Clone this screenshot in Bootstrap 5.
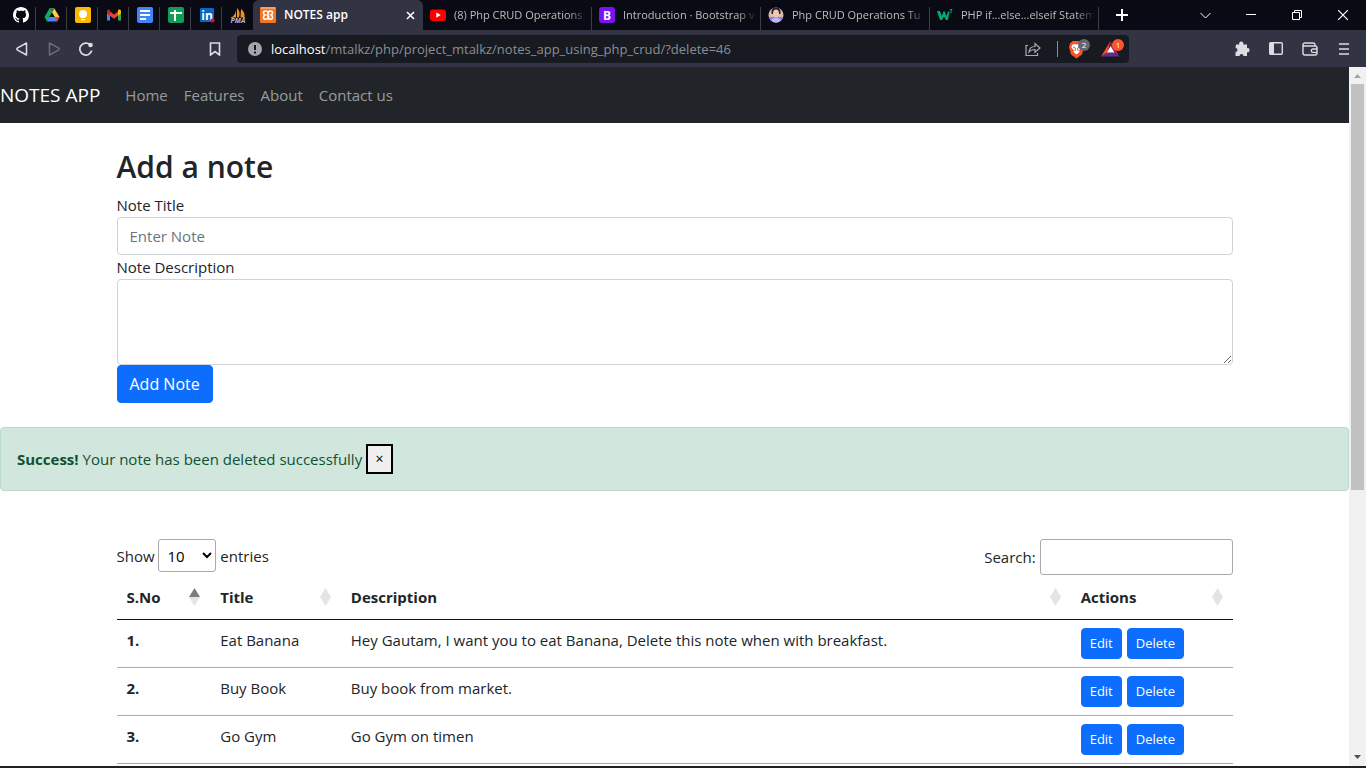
<!DOCTYPE html>
<html lang="en">
<head>
<meta charset="utf-8">
<meta name="viewport" content="width=device-width, initial-scale=1">
<title>NOTES app</title>
<link href="https://cdn.jsdelivr.net/npm/bootstrap@5.3.0/dist/css/bootstrap.min.css" rel="stylesheet">
<style>
  body { font-family: "Open Sans", "Noto Sans", sans-serif; font-size: 15px; line-height: 24px; color: #212529; }
  /* browser frame */
  .tab-strip { background: #0a0a14; height: 30px; padding-left: 5px; color: #bdbec2; font-size: 11px; line-height: 18px; }
  .tab-strip svg, .tool-bar svg { display: block; flex: none; }
  .pin-tab, .page-tab { background: none; border: 0; color: inherit; height: 30px; padding: 0; position: relative; }
  .pin-tab { width: 31px; flex: none; }
  .pin-tab:not(:nth-child(8))::after, .page-tab:not(.current)::after { content: ""; position: absolute; right: 0; top: 7px; bottom: 0; width: 1px; background: #3d3d42; }
  .page-tab { flex: 0 1 169px; min-width: 0; padding: 0 4px 0 7px; text-align: left; }
  .page-tab.current { flex-basis: 170px; background: #323443; color: #fff; font-size: 12px; font-weight: 600; border-radius: 6px 6px 0 0; padding: 0 8px 0 6px; }
  .tab-label { overflow: hidden; white-space: nowrap; flex: 1 1 0; min-width: 0; }
  .fading { -webkit-mask-image: linear-gradient(90deg, #000 85%, transparent); mask-image: linear-gradient(90deg, #000 85%, transparent); }
  .frame-btn { background: none; border: 0; padding: 0; color: #fff; width: 46px; height: 30px; }
  .tool-bar { background: #323443; height: 37px; color: #dcdde1; }
  .tool-side { width: 237px; flex: none; padding: 0 6px; }
  .tool-right { gap: 2px; }
  .tool-btn { background: none; border: 0; padding: 0; color: inherit; width: 32px; height: 32px; }
  .url-box { background: #171a21; height: 28px; border-radius: 4px; padding-right: 2px; font-size: 13px; line-height: 20px; color: #8b8e94; }
  .url-box b { color: #fff; font-weight: 400; }
  .scroll-rail { width: 17px; background: #f1f1f1; flex: none; }
  .scroll-rail svg { display: block; flex: none; }
  .scroll-thumb { flex: 406 0 0; background: #c1c1c1; margin: 0 2px 0 2px; }
  .scroll-rest { flex: 259 0 0; }
  .desk-edge { height: 2px; background: #202124; flex: none; }
  /* notes page */
  .notes-nav .navbar-brand { font-size: 19px; line-height: 30px; margin-right: 17px; }
  .notes-nav { --bs-navbar-color: rgba(255,255,255,.55); }
  .notes-page h2 { font-size: 30px; line-height: 40px; font-weight: 600; margin-bottom: 6px; }
  .notes-page .form-control { font-size: 15px; line-height: 24px; border-color: #ced4da; border-radius: 4px; }
  .notes-page .form-control::placeholder { color: #6c757d; }
  .notes-page .btn { --bs-btn-border-radius: 4px; font-size: 16px; line-height: 24px; --bs-btn-bg: #0d6efd; }
  .notes-page .btn-sm { font-size: 13px; line-height: 21px; }
  .note-alert { background: #d1e7dd; border-color: #badbcc; color: #0f5132; border-radius: 4px; margin-bottom: 48px; line-height: 30px; }
  .alert-x { border: 2px solid #000; background: #efefef; color: #000; width: 27px; height: 30px; padding: 0; font-size: 14px; line-height: 24px; vertical-align: top; }
  .len-select { width: 58px; height: 33px; border: 1px solid #aaa; border-radius: 3px; background: transparent; padding: 4px; color: #000; }
  .find-box { width: 193px; height: 36px; border: 1px solid #aaa; border-radius: 3px; padding: 5px; }
  .notes-table { width: 100%; table-layout: fixed; border-collapse: collapse; }
  .notes-table thead th { padding: 10px; height: 44px; position: relative; border-bottom: 1px solid #111; vertical-align: top; }
  .notes-table tbody th, .notes-table tbody td { padding: 8px 10px; height: 48px; vertical-align: top; border-bottom: 1px solid #aaacae; }
  .notes-table th { font-weight: 700; }
  .sort-mark { position: absolute; right: 10px; top: 13px; }
  .act-pair { gap: 5px; }
</style>
</head>
<body class="d-flex flex-column vh-100 overflow-hidden">

<div class="tab-strip d-flex">
  <button class="pin-tab d-flex align-items-center justify-content-center" aria-label="GitHub"><svg width="16" height="16" viewBox="0 0 16 16" fill="#fff"><path d="M8 0C3.58 0 0 3.58 0 8c0 3.54 2.29 6.53 5.47 7.59.4.07.55-.17.55-.38 0-.19-.01-.82-.01-1.49-2.01.37-2.53-.49-2.69-.94-.09-.23-.48-.94-.82-1.13-.28-.15-.68-.52-.01-.53.63-.01 1.08.58 1.23.82.72 1.21 1.87.87 2.33.66.07-.52.28-.87.51-1.07-1.78-.2-3.64-.89-3.64-3.95 0-.87.31-1.59.82-2.15-.08-.2-.36-1.02.08-2.12 0 0 .67-.21 2.2.82.64-.18 1.32-.27 2-.27s1.36.09 2 .27c1.53-1.04 2.2-.82 2.2-.82.44 1.1.16 1.92.08 2.12.51.56.82 1.27.82 2.15 0 3.07-1.87 3.75-3.65 3.95.29.25.54.73.54 1.48 0 1.07-.01 1.93-.01 2.2 0 .21.15.46.55.38A8.01 8.01 0 0 0 16 8c0-4.42-3.58-8-8-8z"/></svg></button>
  <button class="pin-tab d-flex align-items-center justify-content-center" aria-label="Drive"><svg width="16" height="16" viewBox="0 0 16 16"><path d="M5.400 1.500 .5 10l2.400 4.500L8 5.800z" fill="#11a861"/><path d="M5.400 1.500h5L15.500 10h-4.800z" fill="#ffcf48"/><path d="M5.400 1.500h5L8 5.800z" fill="#0d8a4f"/><path d="M5.300 10h10.200L13 14.500H2.900z" fill="#4688f4"/><path d="M10.800 10h4.700L13 14.500z" fill="#ea4335"/><path d="M8 5.800L10.600 10H5.500z" fill="#0a0a14"/></svg></button>
  <button class="pin-tab d-flex align-items-center justify-content-center" aria-label="Keep"><svg width="16" height="16" viewBox="0 0 16 16"><rect width="16" height="16" rx="2" fill="#fdb900"/><circle cx="8" cy="7" r="4" fill="#fff"/><path d="M6 9h4v2H6zM6 12h4v1.200H6z" fill="#fff"/></svg></button>
  <button class="pin-tab d-flex align-items-center justify-content-center" aria-label="Gmail"><svg width="16" height="16" viewBox="0 0 16 16"><path d="M1 4v9.500h3V7z" fill="#4285f4"/><path d="M15 4v9.500h-3V7z" fill="#34a853"/><path d="M4 4.600v4.200l4 3 4-3V4.600L8 7.600z" fill="#ea4335"/><path d="M1 4.200C1 2.400 3 2 4 3v5.800L1 6.500z" fill="#c5221f"/><path d="M15 4.200C15 2.400 13 2 12 3v5.800l3-2.300z" fill="#fbbc04"/></svg></button>
  <button class="pin-tab d-flex align-items-center justify-content-center" aria-label="Docs"><svg width="16" height="16" viewBox="0 0 16 16"><rect width="16" height="16" rx="2" fill="#4285f4"/><path d="M3 4h10M3 8h10M3 12h6" stroke="#fff" stroke-width="1.800"/></svg></button>
  <button class="pin-tab d-flex align-items-center justify-content-center" aria-label="Sheets"><svg width="16" height="16" viewBox="0 0 16 16"><rect width="16" height="16" rx="2" fill="#0f9d58"/><path d="M2 6h12M7 3v11" stroke="#fff" stroke-width="2"/></svg></button>
  <button class="pin-tab d-flex align-items-center justify-content-center" aria-label="LinkedIn"><svg width="16" height="16" viewBox="0 0 16 16"><rect x="1" y="1" width="14" height="14" rx="1" fill="#0a66c2"/><text x="8" y="12.500" font-size="12" font-weight="700" fill="#fff" text-anchor="middle" font-family="Open Sans">in</text><circle cx="13.500" cy="13.500" r="2" fill="#e0142d"/></svg></button>
  <button class="pin-tab d-flex align-items-center justify-content-center" aria-label="phpMyAdmin"><svg width="16" height="16" viewBox="0 0 16 16"><path d="M6 .5C6.500 4 5 8 1.500 10.500H6zM7 1c3 3 3 6 2 9.500H7zM11 2c3 2 4 5 3.500 8.500h-4z" fill="#f29111"/><path d="M1 10.500h2M13 10.500h2" stroke="#8d8fa6"/><text x="8" y="15.500" font-size="7" font-weight="700" font-style="italic" fill="#b7b8c9" text-anchor="middle" font-family="Open Sans">PMA</text></svg></button>

  <button class="page-tab current d-flex align-items-center gap-2">
    <svg width="17" height="16" viewBox="0 0 17 16"><rect x="1" width="16" height="16" rx="1" fill="#f37623"/><path d="M2 1h14" stroke="#ffc9a0"/><path d="M9 8h-1.500M9 6.200v3.600M9 6.200C9 5 8 4 6.800 4S4.500 4.600 4.500 5.700c0 .9.500 1.800 1.500 2.300-1 .5-1.500 1.400-1.500 2.200 0 1.200 1 2.100 2.300 2.100S9 11.400 9 9.800h1.500M9 6.200h1.500M9 6.200C9 5 10 4 11.200 4s2.300.6 2.300 1.700c0 .9-.5 1.800-1.500 2.300 1 .5 1.500 1.400 1.500 2.200 0 1.200-1 2.100-2.300 2.100S9 11.400 9 9.800" fill="none" stroke="#fff" stroke-width="1.500"/></svg>
    <span class="tab-label">NOTES app</span>
    <svg width="9" height="9" viewBox="0 0 9 9" stroke="#fff" stroke-width="1.600"><path d="M1 1l7 7M8 1L1 8"/></svg>
  </button>
  <button class="page-tab d-flex align-items-center gap-2">
    <svg width="16" height="16" viewBox="0 0 16 16"><rect y="2.500" width="16" height="11.500" rx="3" fill="#f00"/><path d="M6.300 5.500v5.200l4.500-2.600z" fill="#fff"/></svg>
    <span class="tab-label fading">(8) Php CRUD Operations</span>
  </button>
  <button class="page-tab d-flex align-items-center gap-2">
    <svg width="16" height="16" viewBox="0 0 16 16"><rect width="16" height="16" rx="3" fill="#7a12f5"/><text x="8" y="12.500" font-size="12" font-weight="700" fill="#fff" text-anchor="middle" font-family="Open Sans">B</text></svg>
    <span class="tab-label fading">Introduction · Bootstrap v</span>
  </button>
  <button class="page-tab d-flex align-items-center gap-2">
    <svg width="16" height="16" viewBox="0 0 16 16"><defs><clipPath id="face"><circle cx="8" cy="8" r="7.500"/></clipPath></defs><g clip-path="url(#face)"><path fill="#d9bfb0" d="M0 0h16v16H0z"/><path fill="#8f7cf0" d="M0 10h16v6H0z"/><path d="M3.500 7C3 1 6 .3 8 .3s5 .7 4.500 6.700z" fill="#2a2030"/><ellipse cx="8" cy="6.500" rx="3" ry="4" fill="#f3c8a8"/><path d="M3 16c0-4 2-5 5-5s5 1 5 5z" fill="#c2b4ff"/></g></svg>
    <span class="tab-label fading">Php CRUD Operations Tu</span>
  </button>
  <button class="page-tab d-flex align-items-center gap-2">
    <svg width="16" height="16" viewBox="0 0 16 16"><path d="M0 4h3l1.700 5L6.500 4.500h1.200L9.500 9 11 4.500h1.500L11 13H9L7 9.500 5 13H3z" fill="#04aa6d"/><path d="M12.800 2.500H15L13.800 4c1.200 0 1.300 2-1 1.700" fill="none" stroke="#04aa6d"/></svg>
    <span class="tab-label fading">PHP if...else...elseif Statem</span>
  </button>
  <button class="frame-btn d-flex align-items-center justify-content-center" aria-label="New tab"><svg width="12" height="12" viewBox="0 0 12 12" stroke="#fff" stroke-width="2"><path d="M6 0v12M0 6h12"/></svg></button>
  <div class="d-flex ms-auto">
    <button class="frame-btn d-flex align-items-center justify-content-center" aria-label="Search tabs"><svg width="11" height="7" viewBox="0 0 11 7" fill="none" stroke="#fff"><path d="M.5 1l5 5 5-5"/></svg></button>
    <button class="frame-btn d-flex align-items-center justify-content-center" aria-label="Minimize"><svg width="10" height="2" viewBox="0 0 10 2"><path d="M0 0h10v1H0z" fill="#fff"/></svg></button>
    <button class="frame-btn d-flex align-items-center justify-content-center" aria-label="Restore"><svg width="10" height="10" viewBox="0 0 10 10" fill="none" stroke="#fff"><path d="M.5 2.500h7v7h-7zM2.500 2.500v-2h7v7h-2"/></svg></button>
    <button class="frame-btn d-flex align-items-center justify-content-center" aria-label="Close window"><svg width="10" height="10" viewBox="0 0 10 10" stroke="#fff" stroke-width="1.200"><path d="M0 0l10 10M10 0L0 10"/></svg></button>
  </div>
</div>

<div class="tool-bar d-flex align-items-center">
  <div class="tool-side d-flex align-items-center">
    <button class="tool-btn d-flex align-items-center justify-content-center" aria-label="Back"><svg width="12" height="14" viewBox="0 0 12 14" fill="none" stroke="currentColor" stroke-width="1.500" stroke-linejoin="round"><path d="M10.500 1v12L1.200 7.800Q.5 7 1.200 6.200z"/></svg></button>
    <button class="tool-btn d-flex align-items-center justify-content-center" aria-label="Forward"><svg width="12" height="14" viewBox="0 0 12 14" fill="none" stroke="#6b6d78" stroke-width="1.500" stroke-linejoin="round"><path d="M1.500 1v12l9.300-5.200q.7-.8 0-1.600z"/></svg></button>
    <button class="tool-btn d-flex align-items-center justify-content-center" aria-label="Reload"><svg width="14" height="14" viewBox="0 0 14 14"><path d="M11 2.700A6 6 0 1 0 12.700 8.500" fill="none" stroke="currentColor" stroke-width="1.700"/><circle cx="11.500" cy="3" r="2.300" fill="currentColor"/></svg></button>
    <button class="tool-btn d-flex align-items-center justify-content-center ms-auto" aria-label="Bookmark"><svg width="12" height="14" viewBox="0 0 12 14" fill="none" stroke="currentColor" stroke-width="1.600"><path d="M1.500 1h9v12L6 9.500 1.500 13z"/></svg></button>
  </div>
  <div class="url-box d-flex align-items-center flex-grow-1 ps-2">
    <svg class="me-2" width="18" height="14" viewBox="0 0 18 14"><circle cx="10" cy="7" r="7" fill="#a3a6ad"/><path d="M9 3h2v5H9zM9 9.500h2v2H9z" fill="#171a21"/></svg>
    <span class="flex-grow-1"><b>localhost</b>/mtalkz/php/project_mtalkz/notes_app_using_php_crud/?delete=46</span>
    <svg class="me-3" width="16" height="14" viewBox="0 0 16 14" fill="none" stroke="#a9abb1" stroke-width="1.200"><path d="M3 3.500H1v10h11.500V11M4 10c.3-3.500 2.300-5.500 6-5.500V1.500L15 6l-5 4.300V7.500C7.500 7.500 5.500 8 4 10z"/></svg>
    <svg class="me-2" width="1" height="16" viewBox="0 0 1 16"><path d="M0 0h1v16H0z" fill="#8b8e94"/></svg>
    <svg class="me-2" width="26" height="20" viewBox="0 0 26 20"><path d="M4 4.500L6.500 2h8L17 4.500 18 8l-2 7.500-5.500 4L5 15.500 3 8z" fill="#fb542b"/><path d="M6 6l2.500-1 2 .5 2-.5L15 6l.5 2.500-2.500 3 .5 1.500-3 2.500-3-2.500.5-1.500-2.500-3z" fill="#fff"/><path d="M7 8l2.500 1-.5 3M14 8l-2.500 1 .5 3" stroke="#fb542b" fill="none"/><circle cx="18" cy="6" r="6" fill="#656872"/><text x="18" y="9" font-size="8" fill="#fff" text-anchor="middle" font-family="Open Sans">2</text></svg>
    <svg width="27" height="20" viewBox="0 0 27 20"><path d="M10.500 2L1 17.500l6.500-4z" fill="#ff4724"/><path d="M1 17.500h18.500l-5-4h-7z" fill="#662d91"/><path d="M10.500 2l9 15.500-5-4-4-6z" fill="#9e1f63"/><path d="M10.500 7l4 6.500h-7.500z" fill="#fff"/><circle cx="18" cy="6" r="6" fill="#fb542b"/><text x="18" y="9" font-size="8" fill="#fff" text-anchor="middle" font-family="Open Sans">1</text></svg>
  </div>
  <div class="tool-side tool-right d-flex align-items-center justify-content-end">
    <button class="tool-btn d-flex align-items-center justify-content-center" aria-label="Extensions"><svg width="16" height="16" viewBox="0 0 16 16" fill="currentColor"><path d="M2 3.500h3.200a2.200 2.200 0 1 1 4.100 0H13V7.200a2.100 2.100 0 1 1 0 4.100V15H9.500a2 2 0 1 0-4 0H1.500v-4a2 2 0 1 0 0-4z"/></svg></button>
    <button class="tool-btn d-flex align-items-center justify-content-center" aria-label="Sidebar"><svg width="14" height="13" viewBox="0 0 14 13"><rect x=".7" y=".7" width="12.600" height="11.600" rx="1" fill="none" stroke="currentColor" stroke-width="1.400"/><path d="M1 1h4v11H1z" fill="currentColor"/></svg></button>
    <button class="tool-btn d-flex align-items-center justify-content-center" aria-label="Wallet"><svg width="16" height="14" viewBox="0 0 16 14" fill="none" stroke="currentColor" stroke-width="1.400"><path d="M13 4V3q0-2-2-2H3Q1 1 1 3v8q0 2 2 2h10q2 0 2-2V6q0-2-2-2H3Q1 4 1 3M15 7h-4a1.700 1.700 0 0 0 0 3.400h4"/></svg></button>
    <button class="tool-btn d-flex align-items-center justify-content-center" aria-label="Menu"><svg width="10" height="12" viewBox="0 0 10 12" stroke="currentColor" stroke-width="1.500"><path d="M0 1h10M0 6h10M0 11h10"/></svg></button>
  </div>
</div>

<div class="d-flex flex-grow-1 overflow-hidden">
  <main class="notes-page flex-grow-1 overflow-hidden bg-white">
    <nav class="notes-nav navbar navbar-expand navbar-dark bg-dark py-2">
      <a class="navbar-brand" href="#">NOTES APP</a>
      <div class="navbar-nav">
        <a class="nav-link" href="#">Home</a>
        <a class="nav-link" href="#">Features</a>
        <a class="nav-link" href="#">About</a>
        <a class="nav-link" href="#">Contact us</a>
      </div>
    </nav>

    <form class="container my-4">
      <h2>Add a note</h2>
      <label class="d-block" for="title">Note Title</label>
      <input class="form-control" type="text" id="title" placeholder="Enter Note">
      <label class="d-block" for="desc">Note Description</label>
      <textarea class="form-control d-block" id="desc" rows="3"></textarea>
      <button type="submit" class="btn btn-primary d-block">Add Note</button>
    </form>

    <div class="note-alert alert" role="alert">
      <strong>Success!</strong> Your note has been deleted successfully
      <button type="button" class="alert-x" aria-label="Close">×</button>
    </div>

    <div class="container">
      <div class="d-flex justify-content-between align-items-start">
        <label for="len">Show <select class="len-select" id="len"><option>10</option><option>25</option></select> entries</label>
        <label for="find">Search: <input class="find-box" type="search" id="find"></label>
      </div>
      <table class="notes-table">
        <colgroup><col style="width:8.4%"><col style="width:11.7%"><col style="width:65.4%"><col></colgroup>
        <thead>
          <tr>
            <th scope="col">S.No<svg class="sort-mark" width="11" height="18" viewBox="0 0 11 18"><path d="M0 9l5.500-9L11 9z" fill="#7b7d80"/><path d="M0 9h11l-5.500 9z" fill="#e3e4e4"/></svg></th>
            <th scope="col">Title<svg class="sort-mark" width="11" height="18" viewBox="0 0 11 18"><path d="M0 9l5.500-9L11 9l-5.500 9z" fill="#e3e4e4"/></svg></th>
            <th scope="col">Description<svg class="sort-mark" width="11" height="18" viewBox="0 0 11 18"><path d="M0 9l5.500-9L11 9l-5.500 9z" fill="#e3e4e4"/></svg></th>
            <th scope="col">Actions<svg class="sort-mark" width="11" height="18" viewBox="0 0 11 18"><path d="M0 9l5.500-9L11 9l-5.500 9z" fill="#e3e4e4"/></svg></th>
          </tr>
        </thead>
        <tbody>
          <tr><th scope="row">1.</th><td>Eat Banana</td><td>Hey Gautam, I want you to eat Banana, Delete this note when with breakfast.</td><td><div class="act-pair d-flex"><button class="btn btn-sm btn-primary">Edit</button><button class="btn btn-sm btn-primary">Delete</button></div></td></tr>
          <tr><th scope="row">2.</th><td>Buy Book</td><td>Buy book from market.</td><td><div class="act-pair d-flex"><button class="btn btn-sm btn-primary">Edit</button><button class="btn btn-sm btn-primary">Delete</button></div></td></tr>
          <tr><th scope="row">3.</th><td>Go Gym</td><td>Go Gym on timen</td><td><div class="act-pair d-flex"><button class="btn btn-sm btn-primary">Edit</button><button class="btn btn-sm btn-primary">Delete</button></div></td></tr>
        </tbody>
      </table>
    </div>
  </main>
  <div class="scroll-rail d-flex flex-column">
    <svg width="17" height="17" viewBox="0 0 17 17"><path d="M5 11l3.500-4L12 11z" fill="#a3a3a3"/></svg>
    <div class="scroll-thumb"></div>
    <div class="scroll-rest"></div>
    <svg width="17" height="17" viewBox="0 0 17 17"><path d="M5 6l3.500 4L12 6z" fill="#505050"/></svg>
  </div>
</div>
<div class="desk-edge"></div>
<script src="https://cdn.jsdelivr.net/npm/bootstrap@5.3.0/dist/js/bootstrap.bundle.min.js"></script>
</body>
</html>
